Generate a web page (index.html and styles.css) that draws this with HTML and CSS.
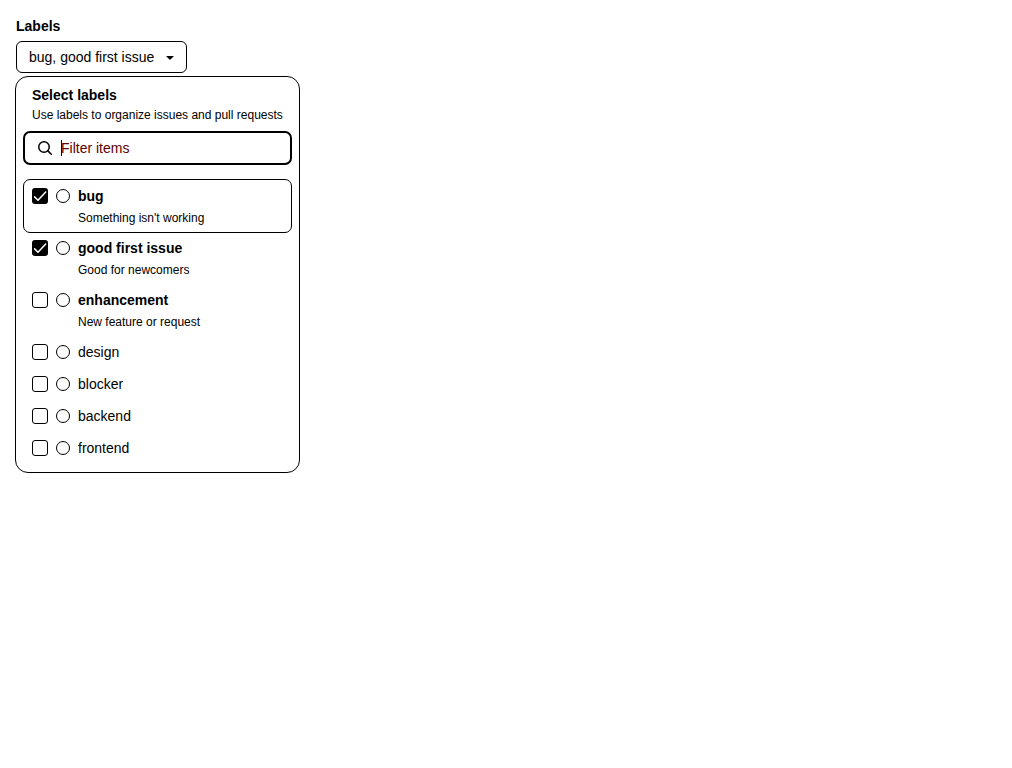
FILE: index.html
```html
<!DOCTYPE html>
<html lang="en">
<head>
<meta charset="utf-8">
<title>Labels</title>
<link rel="stylesheet" href="styles.css">
</head>
<body>
<main class="field">
  <div class="field-label">Labels</div>
  <button class="select-button" type="button">
    <span>bug, good first issue</span>
    <svg class="icon" viewBox="0 0 16 16"><path d="m4.427 7.427 3.396 3.396a.25.25 0 0 0 .354 0l3.396-3.396A.25.25 0 0 0 11.396 7H4.604a.25.25 0 0 0-.177.427Z"/></svg>
  </button>
  <section class="panel">
    <header class="panel-header">
      <h1 class="panel-title">Select labels</h1>
      <div class="panel-subtitle">Use labels to organize issues and pull requests</div>
    </header>
    <div class="filter">
      <svg class="icon search" viewBox="0 0 16 16"><circle cx="7" cy="7" r="5.25"/><path d="M10.9 10.9 14.3 14.3"/></svg>
      <span class="filter-text">Filter items<span class="caret"></span></span>
    </div>
    <ul class="list">
      <li class="item active">
        <span class="check checked"><svg class="tick" viewBox="0 0 16 16"><path d="M2.6 8.9 6 12.3 13.7 4.1"/></svg></span>
        <span class="dot"></span>
        <div class="text"><div class="name strong">bug</div><div class="description">Something isn't working</div></div>
      </li>
      <li class="item">
        <span class="check checked"><svg class="tick" viewBox="0 0 16 16"><path d="M2.6 8.9 6 12.3 13.7 4.1"/></svg></span>
        <span class="dot"></span>
        <div class="text"><div class="name strong">good first issue</div><div class="description">Good for newcomers</div></div>
      </li>
      <li class="item">
        <span class="check"></span>
        <span class="dot"></span>
        <div class="text"><div class="name strong">enhancement</div><div class="description">New feature or request</div></div>
      </li>
      <li class="item"><span class="check"></span><span class="dot"></span><div class="name">design</div></li>
      <li class="item"><span class="check"></span><span class="dot"></span><div class="name">blocker</div></li>
      <li class="item"><span class="check"></span><span class="dot"></span><div class="name">backend</div></li>
      <li class="item"><span class="check"></span><span class="dot"></span><div class="name">frontend</div></li>
    </ul>
  </section>
</main>
</body>
</html>
```

FILE: styles.css
```css
* {
  box-sizing: border-box;
}

body {
  margin: 0;
  background: #fff;
  color: #000;
  font: 14px/20px "Liberation Sans", Arial, sans-serif;
}

.field {
  display: flex;
  flex-direction: column;
  align-items: flex-start;
  padding: 16px 15px;
}

.field-label {
  margin: 0 0 5px 1px;
  font-weight: 700;
}

.select-button {
  display: flex;
  align-items: center;
  gap: 8px;
  width: 171px;
  height: 32px;
  margin: 0 0 3px 1px;
  padding: 0 8px 0 12px;
  border: 1px solid #000;
  border-radius: 6px;
  background: #fff;
  color: #000;
  font: inherit;
  white-space: nowrap;
}

.icon {
  flex: none;
  width: 16px;
  height: 16px;
  fill: #000;
}

.search {
  fill: none;
  stroke: #000;
  stroke-width: 1.5;
  stroke-linecap: round;
}

.panel {
  width: 285px;
  height: 397px;
  padding: 8px 7px;
  border: 1px solid #000;
  border-radius: 13px;
}

.panel-header {
  padding: 0 9px;
  white-space: nowrap;
}

.panel-title {
  margin: 0;
  font-size: 14px;
  line-height: 20px;
}

.panel-subtitle {
  font-size: 12px;
  line-height: 20px;
}

.filter {
  display: flex;
  align-items: center;
  gap: 8px;
  height: 34px;
  margin: 6px 0 15px;
  padding: 0 12px;
  border: 2px solid #000;
  border-radius: 7px;
}

.filter-text {
  position: relative;
  color: #600000;
}

.caret {
  position: absolute;
  top: 2px;
  left: 0;
  width: 1px;
  height: 16px;
  background: #000;
}

.list {
  margin: 0;
  padding: 0 1px;
  list-style: none;
}

.item {
  display: flex;
  gap: 8px;
  padding: 6px 8px;
  border-radius: 6px;
}

.item.active {
  outline: 1px solid #000;
}

.check {
  width: 16px;
  height: 16px;
  margin-top: 2px;
  border: 1px solid #000;
  border-radius: 3px;
}

.checked {
  border: 0;
  background: #000;
}

.tick {
  display: block;
  width: 16px;
  height: 16px;
  fill: none;
  stroke: #fff;
  stroke-width: 1.5;
  stroke-linecap: round;
  stroke-linejoin: round;
}

.dot {
  width: 14px;
  height: 14px;
  margin-top: 3px;
  border: 1px solid #000;
  border-radius: 50%;
}

.strong {
  font-weight: 700;
}

.description {
  margin-top: 4px;
  font-size: 12px;
  line-height: 16px;
}
```
